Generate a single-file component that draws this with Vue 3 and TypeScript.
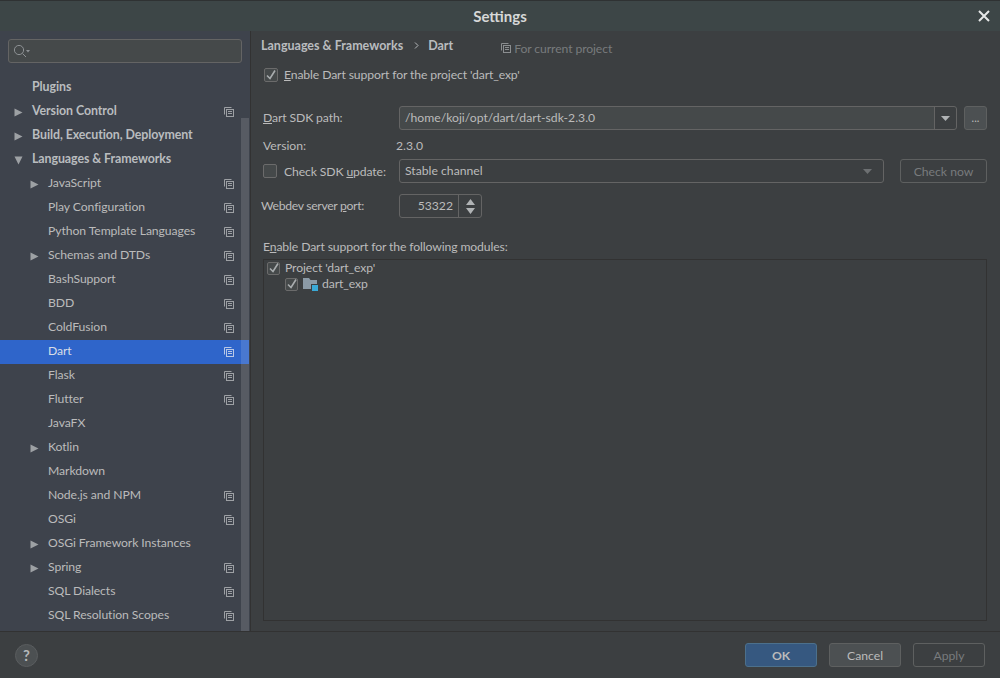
<script setup lang="ts">
interface Row { label: string; level: number; arrow?: 'right' | 'down'; copy?: boolean; selected?: boolean; strong?: boolean }
const rows: Row[] = [
  { label: 'Plugins', level: 0, strong: true },
  { label: 'Version Control', level: 0, arrow: 'right', copy: true, strong: true },
  { label: 'Build, Execution, Deployment', level: 0, arrow: 'right', strong: true },
  { label: 'Languages & Frameworks', level: 0, arrow: 'down', strong: true },
  { label: 'JavaScript', level: 1, arrow: 'right', copy: true },
  { label: 'Play Configuration', level: 1, copy: true },
  { label: 'Python Template Languages', level: 1, copy: true },
  { label: 'Schemas and DTDs', level: 1, arrow: 'right', copy: true },
  { label: 'BashSupport', level: 1, copy: true },
  { label: 'BDD', level: 1, copy: true },
  { label: 'ColdFusion', level: 1, copy: true },
  { label: 'Dart', level: 1, copy: true, selected: true },
  { label: 'Flask', level: 1, copy: true },
  { label: 'Flutter', level: 1, copy: true },
  { label: 'JavaFX', level: 1 },
  { label: 'Kotlin', level: 1, arrow: 'right' },
  { label: 'Markdown', level: 1 },
  { label: 'Node.js and NPM', level: 1, copy: true },
  { label: 'OSGi', level: 1, copy: true },
  { label: 'OSGi Framework Instances', level: 1, arrow: 'right' },
  { label: 'Spring', level: 1, arrow: 'right', copy: true },
  { label: 'SQL Dialects', level: 1, copy: true },
  { label: 'SQL Resolution Scopes', level: 1, copy: true },
]
</script>

<template>
  <div class="dialog">
    <header class="titlebar">
      <span class="title">Settings</span>
      <svg class="close" width="12" height="12" viewBox="0 0 12 12"><path d="M1 1l10 10M11 1L1 11" stroke="#e6e8e8" stroke-width="2" fill="none" /></svg>
    </header>

    <div class="body">
      <aside class="sidebar">
        <div class="search">
          <svg width="20" height="16" viewBox="0 0 20 16">
            <circle cx="7" cy="7" r="4.600" fill="none" stroke="#8d9194" stroke-width="1" />
            <path d="M10.500 10.500l3.500 3.500" stroke="#8d9194" stroke-width="1" />
            <path d="M14 7h4l-2 2.400z" fill="#8d9194" />
          </svg>
        </div>
        <div class="tree">
          <div v-for="row in rows" :key="row.label" class="row" :class="{ selected: row.selected, strong: row.strong, nested: row.level === 1 }">
            <span class="arrow-slot">
              <svg v-if="row.arrow === 'right'" width="9" height="9" viewBox="0 0 9 9"><path d="M0.500 0.500l8 4-8 4z" fill="#9da1a4" /></svg>
              <svg v-else-if="row.arrow === 'down'" width="9" height="9" viewBox="0 0 9 9"><path d="M0.500 0.500h8l-4 8z" fill="#9da1a4" /></svg>
            </span>
            <span class="row-label">{{ row.label }}</span>
            <svg v-if="row.copy" class="copy" width="10" height="10" viewBox="0 0 10 10">
              <path d="M7.500 0.500h-7v7" fill="none" stroke="currentColor" />
              <rect x="2.500" y="2.500" width="7" height="7" fill="none" stroke="currentColor" />
              <path d="M4 4.500h4M4 6.500h4" stroke="currentColor" />
            </svg>
          </div>
          <div class="scrollbar"></div>
        </div>
      </aside>

      <main class="panel">
        <div class="crumbs">
          <span class="crumb">Languages &amp; Frameworks</span>
          <svg class="chev" width="5" height="7" viewBox="0 0 5 7"><path d="M1 0.500l3 3-3 3" fill="none" stroke="#b5b8ba" /></svg>
          <span class="crumb">Dart</span>
          <span class="scope">
            <svg width="10" height="10" viewBox="0 0 10 10" class="scope-icon">
              <path d="M7.500 0.500h-7v7" fill="none" stroke="currentColor" />
              <rect x="2.500" y="2.500" width="7" height="7" fill="none" stroke="currentColor" />
              <path d="M4 4.500h4M4 6.500h4" stroke="currentColor" />
            </svg>
            For current project
          </span>
        </div>

        <label class="check-row enable">
          <span class="check"><svg width="10" height="10" viewBox="0 0 10 10"><path d="M1 5.500l3 3 5-8" fill="none" stroke="#a9adaf" stroke-width="1.600" /></svg></span>
          <span class="tight"><u>E</u>nable Dart support for the project 'dart_exp'</span>
        </label>

        <div class="form-row sdk">
          <span class="form-label tight"><u>D</u>art SDK path:</span>
          <div class="field combo editable">
            <span class="field-text">/home/koji/opt/dart/dart-sdk-2.3.0</span>
            <span class="combo-btn"><svg width="9" height="5" viewBox="0 0 9 5"><path d="M0 0h9L4.500 5z" fill="#b0b3b5" /></svg></span>
          </div>
          <button class="browse">...</button>
        </div>

        <div class="form-row version">
          <span class="form-label">Version:</span>
          <span class="version-val">2.3.0</span>
        </div>

        <div class="form-row update">
          <label class="check-row update-check">
            <span class="check"></span>
            <span class="tight">Check SDK <u>u</u>pdate:</span>
          </label>
          <div class="field combo channel">
            <span class="field-text">Stable channel</span>
            <svg class="dim-arrow" width="9" height="5" viewBox="0 0 9 5"><path d="M0 0h9L4.500 5z" fill="#6d7072" /></svg>
          </div>
          <button class="check-now">Check now</button>
        </div>

        <div class="form-row port">
          <span class="form-label port-label">Webdev server <u>p</u>ort:</span>
          <div class="field spinner">
            <span class="spin-val">53322</span>
            <span class="spin-btn">
              <svg width="9" height="15" viewBox="0 0 9 15"><path d="M4.500 0L9 6H0zM0 9h9l-4.500 6z" fill="#b0b3b5" /></svg>
            </span>
          </div>
        </div>

        <div class="modules-label tight">E<u>n</u>able Dart support for the following modules:</div>
        <div class="modules">
          <div class="mod-row">
            <span class="check small"><svg width="10" height="10" viewBox="0 0 10 10"><path d="M1 5.500l3 3 5-8" fill="none" stroke="#a9adaf" stroke-width="1.600" /></svg></span>
            <span class="mod-text">Project 'dart_exp'</span>
          </div>
          <div class="mod-row child">
            <span class="check small"><svg width="10" height="10" viewBox="0 0 10 10"><path d="M1 5.500l3 3 5-8" fill="none" stroke="#a9adaf" stroke-width="1.600" /></svg></span>
            <svg class="folder" width="15" height="14" viewBox="0 0 15 14">
              <path d="M0 1h6l1.500 2H14v9H0z" fill="#8b9aa6" />
              <rect x="8" y="7" width="7" height="7" fill="#3c3f41" />
              <rect x="9" y="8" width="6" height="6" fill="#3aa9d6" />
            </svg>
            <span class="mod-text">dart_exp</span>
          </div>
        </div>
      </main>
    </div>

    <footer class="footer">
      <span class="help">?</span>
      <div class="actions">
        <button class="btn ok">OK</button>
        <button class="btn cancel">Cancel</button>
        <button class="btn apply">Apply</button>
      </div>
    </footer>
  </div>
</template>

<style>
html, body { margin: 0; background: #3c3f41; }
</style>

<style scoped>
.dialog {
  width: 1000px;
  height: 678px;
  display: flex;
  flex-direction: column;
  background: #3c3f41;
  color: #bbbbbb;
  font-family: Lato, "Noto Sans", sans-serif;
  font-size: 12.2px;
  overflow: hidden;
}
.tight { letter-spacing: -0.12px; }
.titlebar {
  height: 31px;
  flex: none;
  box-sizing: border-box;
  border-top: 1px solid #2f3233;
  background: #3d4647;
  display: flex;
  align-items: center;
  justify-content: center;
  position: relative;
}
.title { font-weight: 700; font-size: 15px; color: #d6d8d8; }
.close { position: absolute; right: 10px; top: 9px; }
.body { flex: 1; display: flex; min-height: 0; }
.sidebar {
  width: 250px;
  flex: none;
  box-sizing: border-box;
  background: #3e434c;
  display: flex;
  flex-direction: column;
}
.search {
  margin: 8px 8px 12px;
  height: 24px;
  width: 234px;
  box-sizing: border-box;
  border: 1px solid #646464;
  border-radius: 3px;
  background: #45494a;
  display: flex;
  align-items: center;
  padding-left: 3px;
}
.tree { position: relative; flex: 1; padding-top: 1px; }
.scrollbar {
  position: absolute;
  right: 1px;
  top: 43px;
  bottom: 0;
  width: 8px;
  background: rgba(255, 255, 255, 0.13);
}
.row {
  height: 24px;
  display: flex;
  align-items: center;
  padding-left: 14px;
  position: relative;
  line-height: 22px;
  padding-bottom: 3px;
  box-sizing: border-box;
  letter-spacing: -0.08px;
}
.row.nested { padding-left: 30px; }
.row.strong .row-label { font-weight: 700; color: #b9bcbf; font-size: 12.400px; }
.row.selected { background: #2f65ca; color: #d8dde6; margin-right: 1px; }
.arrow-slot { width: 18px; flex: none; display: flex; align-items: center; margin-top: 3px; }
.copy { position: absolute; left: 224px; top: 7px; color: #9da0a4; }
.row.selected .copy { color: #b9c8e6; }
.panel {
  flex: 1;
  box-sizing: border-box;
  border-left: 1px solid #323232;
  padding: 0 13px 10px 10px;
  display: flex;
  flex-direction: column;
  min-width: 0;
}
.crumbs { height: 30px; display: flex; align-items: center; padding-bottom: 1px; box-sizing: border-box; }
.crumb { font-weight: 700; color: #b9bcbf; font-size: 12.500px; }
.chev { margin: 0 9px 0 11px; }
.scope { margin-left: 48px; display: flex; align-items: center; color: #787b7d; margin-top: 5px; letter-spacing: -0.1px; }
.scope-icon { margin-right: 3px; color: #8b8e90; }
.check-row { display: flex; align-items: center; }
.enable { height: 28px; margin-left: 3px; gap: 6px; padding-bottom: 1px; box-sizing: border-box; }
.check {
  width: 14px;
  height: 14px;
  flex: none;
  box-sizing: border-box;
  border: 1px solid #6b6b6b;
  border-radius: 2px;
  background: #45494a;
  display: flex;
  align-items: center;
  justify-content: center;
}
.check.small { width: 13px; height: 13px; }
.form-row { display: flex; align-items: center; }
.form-label { width: 136px; flex: none; margin-left: 2px; margin-top: -1px; }
.sdk { height: 24px; margin-top: 17px; }
.field {
  box-sizing: border-box;
  border: 1px solid #646464;
  border-radius: 3px;
  height: 24px;
  display: flex;
  align-items: center;
}
.field-text { padding-left: 5px; flex: 1; line-height: 20px; margin-top: -1px; }
.editable { width: 559px; background: #45494a; }
.combo-btn {
  width: 21px;
  height: 100%;
  flex: none;
  background: #3c3f41;
  border-left: 1px solid #646464;
  display: flex;
  align-items: center;
  justify-content: center;
  border-radius: 0 3px 3px 0;
}
.browse {
  margin-left: 7px;
  width: 23px;
  height: 24px;
  box-sizing: border-box;
  padding: 0 0 2px;
  border: 1px solid #5e6060;
  border-radius: 3px;
  background: #4c5052;
  color: #bbbbbb;
  font: inherit;
  font-size: 11px;
}
.version { height: 20px; margin-top: 6px; }
.version-val { margin-left: -3px; margin-top: -1px; }
.update { height: 24px; margin-top: 3px; }
.update-check { width: 136px; flex: none; margin-left: 2px; gap: 7px; }
.channel { width: 485px; padding-right: 11px; }
.dim-arrow { flex: none; }
.check-now {
  margin-left: 16px;
  width: 87px;
  height: 24px;
  box-sizing: border-box;
  padding: 0;
  border: 1px solid #5e6060;
  border-radius: 3px;
  background: transparent;
  color: #787b7d;
  font: inherit;
}
.port { height: 24px; margin-top: 11px; }
.port-label { margin-left: 0; width: 138px; letter-spacing: -0.32px; }
.spinner { width: 83px; }
.spin-val { flex: 1; text-align: right; padding-right: 5px; margin-top: -1px; }
.spin-btn {
  width: 22px;
  height: 100%;
  flex: none;
  border-left: 1px solid #646464;
  display: flex;
  align-items: center;
  justify-content: center;
}
.modules-label { margin: 21px 0 0 2px; height: 20px; line-height: 16px; }
.modules {
  margin-left: 2px;
  flex: 1;
  width: 724px;
  box-sizing: border-box;
  border: 1px solid #323232;
  padding: 0 0 0 3px;
}
.mod-row { display: flex; align-items: center; height: 16px; gap: 5px; }
.mod-row.child { padding-left: 18px; margin-top: 0; }
.mod-text { margin-top: -1px; letter-spacing: -0.1px; }
.folder { margin-right: -1px; }
.footer {
  height: 47px;
  flex: none;
  box-sizing: border-box;
  border-top: 1px solid #323232;
  display: flex;
  align-items: center;
  padding: 0 15px;
}
.help {
  width: 23px;
  height: 23px;
  border-radius: 50%;
  background: #4c5052;
  border: 1px solid #5a5d5f;
  box-sizing: border-box;
  display: flex;
  align-items: center;
  justify-content: center;
  font-weight: 700;
  font-size: 15px;
  color: #b5b8ba;
}
.actions { margin-left: auto; display: flex; gap: 12px; }
.btn {
  width: 72px;
  height: 24px;
  box-sizing: border-box;
  border-radius: 3px;
  padding: 0;
  font: inherit;
}
.ok { background: #365880; border: 1px solid #4c708c; color: #bbbbbb; font-weight: 700; }
.cancel { background: #4c5052; border: 1px solid #5e6060; color: #bbbbbb; }
.apply { background: transparent; border: 1px solid #5e6060; color: #787b7d; }
</style>
